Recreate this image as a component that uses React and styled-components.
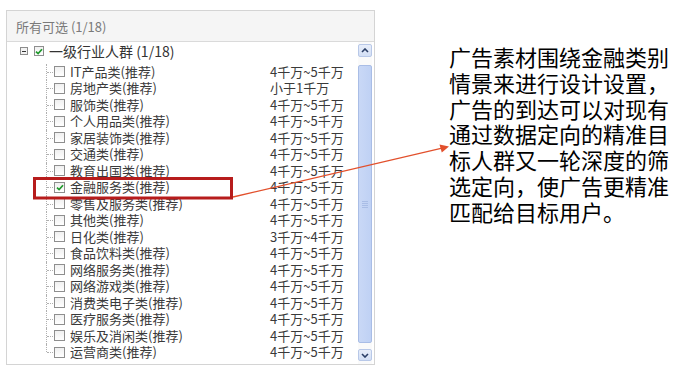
import React from "react";
import styled, { createGlobalStyle } from "styled-components";

const Global = createGlobalStyle`
  html, body { margin: 0; padding: 0; background: #fff; }
  body { font-family: "Noto Sans CJK SC", "Noto Sans", sans-serif; }
`;

const Page = styled.div`
  position: relative;
  width: 678px;
  height: 372px;
  display: flex;
  align-items: flex-start;
  overflow: hidden;
`;

const Panel = styled.section`
  margin: 10px 0 0 6px;
  width: 369px;
  height: 355px;
  box-sizing: border-box;
  border: 1px solid #d4d4d4;
  display: flex;
  flex-direction: column;
  background: #fff;
`;

const Header = styled.div`
  height: 31px;
  flex: none;
  box-sizing: border-box;
  background: #f5f5f5;
  border-bottom: 1px solid #dadada;
  padding-left: 9px;
  display: flex;
  align-items: center;
  font-size: 13px;
  color: #7a7a7a;
`;

const Body = styled.div`
  flex: 1;
  display: flex;
  min-height: 0;
`;

const Tree = styled.div`
  flex: 1;
  padding-top: 1px;
  font-size: 13px;
  color: #3a3a3a;
`;

const RootRow = styled.div`
  height: 16.5px;
  display: flex;
  align-items: center;
  padding-left: 13px;
  font-size: 14px;
  color: #333;
`;

const Toggle = styled.span`
  width: 8px;
  height: 8px;
  box-sizing: border-box;
  border: 1px solid #8c8c8c;
  background: #f2f2f2;
  display: inline-flex;
  align-items: center;
  justify-content: center;
  margin-right: 6px;
  &::after {
    content: "";
    width: 4px;
    height: 1px;
    background: #333;
  }
`;

const Box = styled.span`
  width: ${(p) => p.$size}px;
  height: ${(p) => p.$size}px;
  box-sizing: border-box;
  border: 1px solid #8e8e8e;
  background: linear-gradient(#f0f0f0, #ffffff);
  display: inline-flex;
  align-items: center;
  justify-content: center;
  flex: none;
`;

const RootLabel = styled.span`
  margin-left: 5px;
  white-space: nowrap;
`;

const Children = styled.div`
  margin-top: 4px;
`;

const Row = styled.div`
  position: relative;
  height: 16.5px;
  display: grid;
  grid-template-columns: 11px 195px auto;
  column-gap: 5px;
  align-items: center;
  padding-left: 47px;
  white-space: nowrap;
  line-height: 16.5px;
  &::before {
    content: "";
    position: absolute;
    left: 39px;
    top: 0;
    height: ${(p) => (p.$last ? "50%" : "100%")};
    border-left: 1px dotted #b0b0b0;
  }
  &::after {
    content: "";
    position: absolute;
    left: 40px;
    top: 50%;
    width: 6px;
    border-top: 1px dotted #b0b0b0;
  }
`;

const Name = styled.span``;
const Value = styled.span``;

const Scrollbar = styled.div`
  width: 14px;
  margin-right: 2px;
  padding: 2px 0 3px;
  display: flex;
  flex-direction: column;
  background: #fafafa;
`;

const ArrowBtn = styled.div`
  height: ${(p) => p.$h}px;
  flex: none;
  box-sizing: border-box;
  border: 1px solid #b8c8e8;
  border-radius: 2px;
  background: linear-gradient(#e8eefa, #d3dff5);
  display: flex;
  align-items: center;
  justify-content: center;
`;

const Track = styled.div`
  flex: 1;
  padding: 8px 0 6px;
  display: flex;
`;

const Thumb = styled.div`
  flex: 1;
  box-sizing: border-box;
  border: 1px solid #a9bde6;
  border-radius: 2px;
  background: linear-gradient(90deg, #c9d8f6, #bfd1f4);
  display: flex;
  align-items: center;
  justify-content: center;
`;

const Grip = styled.div`
  width: 6px;
  height: 7px;
  background: repeating-linear-gradient(#a9bde6 0 1px, transparent 1px 2px);
`;

const Note = styled.div`
  margin: 44px 0 0 74px;
  width: 226px;
  font-family: "Noto Sans CJK SC", sans-serif;
  font-size: 22px;
  font-weight: 400;
  line-height: 25.8px;
  color: #000;
`;

const Overlay = styled.svg`
  position: absolute;
  left: 0;
  top: 0;
  pointer-events: none;
`;

const items = [
  ["IT产品类(推荐)", "4千万~5千万"],
  ["房地产类(推荐)", "小于1千万"],
  ["服饰类(推荐)", "4千万~5千万"],
  ["个人用品类(推荐)", "4千万~5千万"],
  ["家居装饰类(推荐)", "4千万~5千万"],
  ["交通类(推荐)", "4千万~5千万"],
  ["教育出国类(推荐)", "4千万~5千万"],
  ["金融服务类(推荐)", "4千万~5千万", true],
  ["零售及服务类(推荐)", "4千万~5千万"],
  ["其他类(推荐)", "4千万~5千万"],
  ["日化类(推荐)", "3千万~4千万"],
  ["食品饮料类(推荐)", "4千万~5千万"],
  ["网络服务类(推荐)", "4千万~5千万"],
  ["网络游戏类(推荐)", "4千万~5千万"],
  ["消费类电子类(推荐)", "4千万~5千万"],
  ["医疗服务类(推荐)", "4千万~5千万"],
  ["娱乐及消闲类(推荐)", "4千万~5千万"],
  ["运营商类(推荐)", "4千万~5千万"],
];

const Check = () => (
  <svg width="8" height="7" viewBox="0 0 8 7">
    <path d="M1 3.6 L3.1 5.6 L7 1.2" fill="none" stroke="#1f9a2c" strokeWidth="1.7" />
  </svg>
);

const Chevron = ({ down }) => (
  <svg width="8" height="5" viewBox="0 0 8 5">
    <path
      d={down ? "M1 1 L4 4 L7 1" : "M1 4 L4 1 L7 4"}
      fill="none"
      stroke="#2b3f66"
      strokeWidth="1.6"
    />
  </svg>
);

export default function App() {
  return (
    <Page>
      <Global />
      <Panel>
        <Header>所有可选 (1/18)</Header>
        <Body>
          <Tree>
            <RootRow>
              <Toggle />
              <Box $size={10}>
                <Check />
              </Box>
              <RootLabel>一级行业人群 (1/18)</RootLabel>
            </RootRow>
            <Children>
              {items.map(([name, value, checked], i) => (
                <Row key={name} $last={i === items.length - 1}>
                  <Box $size={11}>{checked && <Check />}</Box>
                  <Name>{name}</Name>
                  <Value>{value}</Value>
                </Row>
              ))}
            </Children>
          </Tree>
          <Scrollbar>
            <ArrowBtn $h={13}>
              <Chevron />
            </ArrowBtn>
            <Track>
              <Thumb>
                <Grip />
              </Thumb>
            </Track>
            <ArrowBtn $h={12}>
              <Chevron down />
            </ArrowBtn>
          </Scrollbar>
        </Body>
      </Panel>
      <Note>
        广告素材围绕金融类别情景来进行设计设置，广告的到达可以对现有通过数据定向的精准目标人群又一轮深度的筛选定向，使广告更精准匹配给目标用户。
      </Note>
      <Overlay width="678" height="372" viewBox="0 0 678 372">
        <rect x="34.5" y="178.5" width="197" height="19.5" fill="none" stroke="#b71c1c" strokeWidth="3" />
        <line x1="233" y1="197" x2="441" y2="148.3" stroke="#e2502c" strokeWidth="1.3" />
        <polygon points="449,146.5 439.5,144.5 441.8,152.5" fill="#e2502c" />
      </Overlay>
    </Page>
  );
}
